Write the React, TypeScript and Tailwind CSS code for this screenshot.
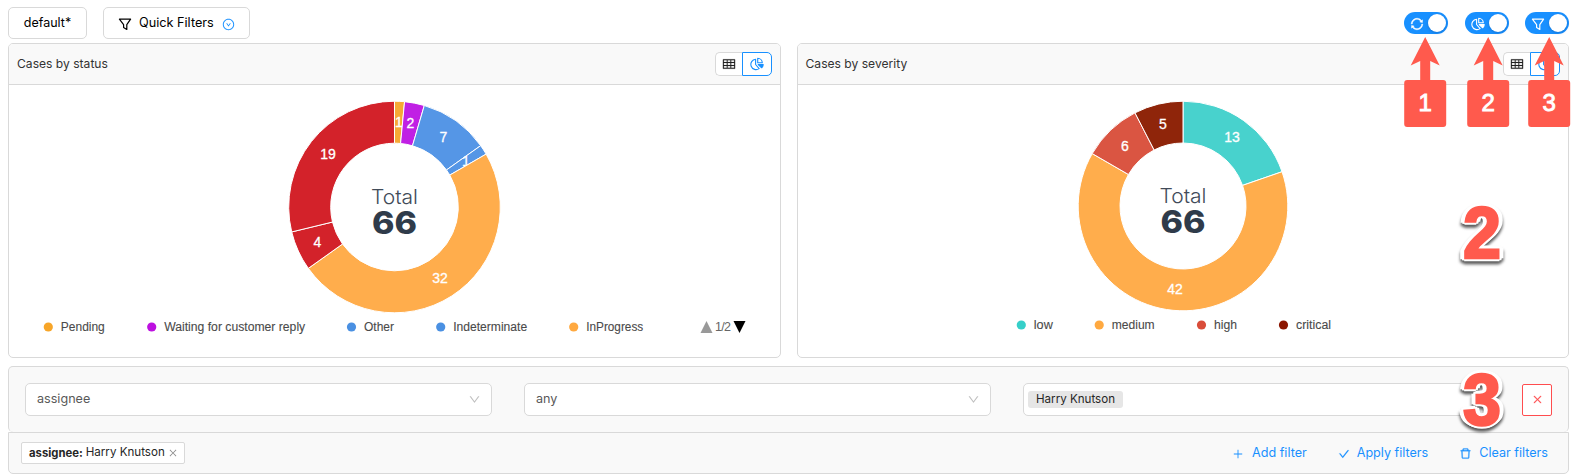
import React from "react";
import {
  AiOutlineCheck,
  AiOutlineClose,
  AiOutlineDelete,
  AiOutlineDown,
  AiOutlineDownCircle,
  AiOutlinePlus,
  AiOutlineSync,
  AiOutlineTable,
} from "react-icons/ai";

type Slice = { value: number; color: string; x: number; y: number };
type Entry = { label: string; color: string; x: number; width: number };

const HELVETICA = "'Liberation Sans', Arial, sans-serif";

function FunnelIcon({ className = "" }: { className?: string }) {
  return (
    <svg viewBox="0 0 14 14" className={className} fill="none" stroke="currentColor" strokeWidth="1.2" strokeLinejoin="round">
      <path d="M1.4 2.2h11.2L8.8 7.6v4.8L5.6 10.4V7.6z" />
    </svg>
  );
}

function PieIcon({ className = "" }: { className?: string }) {
  return (
    <svg viewBox="0 0 14 14" className={className} fill="none" stroke="currentColor" strokeWidth="1.1" strokeLinejoin="round">
      <path d="M5.6 2.2a5.2 5.2 0 1 0 3.5 9.4L5.6 7.5z" />
      <path d="M7.7 1.2v4.5h4.6a4.7 4.7 0 0 0-4.6-4.5z" />
      <path d="M8.2 7.6h5c0 1.3-.6 2.4-1.5 3.2z" fill="currentColor" />
    </svg>
  );
}

function Toggle({ children }: { children: React.ReactNode }) {
  return (
    <button className="flex h-[22px] w-[44px] items-center justify-between rounded-full bg-[#1890ff] pr-[2px] pl-[6px] text-white">
      {children}
      <span className="size-[18px] rounded-full bg-white shadow-[0_1px_3px_rgba(0,35,90,0.25)]" />
    </button>
  );
}

function ring(cx: number, cy: number, r: number, q: number, a: number, b: number) {
  const p = (rad: number, t: number) => `${cx + rad * Math.sin(t)} ${cy - rad * Math.cos(t)}`;
  const big = b - a > Math.PI ? 1 : 0;
  return `M${p(r, a)}A${r} ${r} 0 ${big} 1 ${p(r, b)}L${p(q, b)}A${q} ${q} 0 ${big} 0 ${p(q, a)}Z`;
}

function Donut({ slices, cx, cy, outer, inner }: { slices: Slice[]; cx: number; cy: number; outer: number; inner: number }) {
  const total = slices.reduce((sum, s) => sum + s.value, 0);
  let start = 0;
  return (
    <g>
      {slices.map((s, i) => {
        const from = start;
        start += (s.value / total) * Math.PI * 2;
        return (
          <g key={i}>
            <path d={ring(cx, cy, outer, inner, from, start)} fill={s.color} stroke="#fff" strokeWidth="1" />
            <text x={s.x} y={s.y + 5} fontSize="14" fontFamily={HELVETICA} fill="#fff" stroke="#fff" strokeWidth="0.3" textAnchor="middle">
              {s.value}
            </text>
          </g>
        );
      })}
      <text x={cx - 23.5} y={cy - 3} fontSize="20" fontWeight="300" fill="#414b59" textLength="47" lengthAdjust="spacingAndGlyphs" fontFamily="Inter, sans-serif">
        Total
      </text>
      <text x={cx - 22.5} y={cy + 26.5} fontSize="31" fontWeight="800" fill="#2f3b4a" textLength="45" lengthAdjust="spacingAndGlyphs" fontFamily="Inter, sans-serif">
        {total}
      </text>
    </g>
  );
}

function Legend({ entries, y }: { entries: Entry[]; y: number }) {
  return (
    <g fontFamily={HELVETICA} fontSize="12" fill="#4a4a4a" stroke="#4a4a4a" strokeWidth="0.1">
      {entries.map((e) => (
        <g key={e.label}>
          <circle cx={e.x} cy={y} r="4.6" fill={e.color} stroke="none" />
          <text x={e.x + 12.5} y={y + 4} textLength={e.width} lengthAdjust="spacingAndGlyphs">
            {e.label}
          </text>
        </g>
      ))}
    </g>
  );
}

function Card({ title, children }: { title: string; children: React.ReactNode }) {
  return (
    <section className="flex h-[315px] flex-1 flex-col overflow-hidden rounded-[5px] border border-[#d9d9d9] bg-white">
      <header className="flex h-[41px] shrink-0 items-center justify-between border-b border-[#d9d9d9] bg-[#f9f9f9] pr-2 pl-2">
        <h2 className="text-[12.1px] text-[#333333]">{title}</h2>
        <div className="flex h-6 w-[57px]">
          <button className="flex flex-1 items-center justify-center rounded-l-[5px] border border-r-0 border-[#d9d9d9] bg-white text-[#222222]">
            <AiOutlineTable className="size-[14px]" stroke="currentColor" strokeWidth={10} />
          </button>
          <button className="flex w-[30px] items-center justify-center rounded-r-[5px] border border-[#1890ff] bg-white text-[#1890ff]">
            <PieIcon className="size-[14px]" />
          </button>
        </div>
      </header>
      {children}
    </section>
  );
}

function Select({ value }: { value: string }) {
  return (
    <div className="flex h-[33px] w-[467px] items-center justify-between rounded-[5px] border border-[#d9d9d9] bg-white pr-[10px] pl-[11px]">
      <span className="text-[12.6px] text-[#595959]">{value}</span>
      <AiOutlineDown className="size-[13px] text-[#bfbfbf]" />
    </div>
  );
}

const STATUS: Slice[] = [
  { value: 1, color: "#f6a935", x: 399, y: 122 },
  { value: 2, color: "#c020e4", x: 410.5, y: 123 },
  { value: 7, color: "#5596e6", x: 443.5, y: 137 },
  { value: 1, color: "#5596e6", x: 466, y: 161 },
  { value: 32, color: "#ffad4c", x: 440, y: 278 },
  { value: 4, color: "#d3222a", x: 317.5, y: 242 },
  { value: 19, color: "#d3222a", x: 328, y: 154 },
];

const SEVERITY: Slice[] = [
  { value: 13, color: "#48d2cd", x: 1232, y: 137 },
  { value: 42, color: "#ffad4c", x: 1175, y: 289 },
  { value: 6, color: "#da5542", x: 1125, y: 145.5 },
  { value: 5, color: "#8f250a", x: 1163, y: 124 },
];

const STATUS_LEGEND: Entry[] = [
  { label: "Pending", color: "#f7a528", x: 48.3, width: 44 },
  { label: "Waiting for customer reply", color: "#bd10e0", x: 151.7, width: 141 },
  { label: "Other", color: "#4a90e2", x: 351.5, width: 30 },
  { label: "Indeterminate", color: "#4a90e2", x: 440.7, width: 74 },
  { label: "InProgress", color: "#ffa940", x: 573.7, width: 57 },
];

const SEVERITY_LEGEND: Entry[] = [
  { label: "low", color: "#36cfc9", x: 1021.3, width: 19 },
  { label: "medium", color: "#ffa940", x: 1099.2, width: 43 },
  { label: "high", color: "#d94d3a", x: 1201.5, width: 23 },
  { label: "critical", color: "#8b1500", x: 1283.5, width: 35 },
];

const MARKERS = [
  { n: 1, x: 1425.2 },
  { n: 2, x: 1488.2 },
  { n: 3, x: 1549.2 },
];

function Annotations() {
  return (
    <svg className="pointer-events-none absolute top-0 left-0" width="1572" height="475" fontFamily={HELVETICA}>
      {MARKERS.map(({ n, x }) => (
        <g key={n} fill="#ff5a4d">
          <path d={`M${x} 37l14.5 28.5l-9.5-4.5v20h-10v-20l-9.5 4.5z`} />
          <rect x={x - 21} y="80" width="42" height="47" rx="3" />
          <text x={x} y="111" fontSize="24" fill="#fff" stroke="#fff" strokeWidth="0.9" textAnchor="middle">
            {n}
          </text>
        </g>
      ))}
      {[
        { n: 2, y: 258 },
        { n: 3, y: 425 },
      ].map(({ n, y }) => (
        <text
          key={n}
          x={1482}
          y={y}
          fontSize="72"
          fontWeight="700"
          textAnchor="middle"
          fill="#ff5a4d"
          stroke="#ff5a4d"
          strokeWidth="2.5"
          textLength="38"
          lengthAdjust="spacingAndGlyphs"
          className="[filter:drop-shadow(2px_1px_0_white)_drop-shadow(-2px_1px_0_white)_drop-shadow(2px_-2px_0_white)_drop-shadow(-2px_-1px_0_white)_drop-shadow(0_3px_1.5px_rgba(0,0,0,0.65))]"
        >
          {n}
        </text>
      ))}
    </svg>
  );
}

export default function App() {
  return (
    <main className="relative h-[475px] w-[1572px] overflow-hidden bg-white pt-[7px] pr-[3px] pl-2 font-['Inter',sans-serif] text-[#262626]">
      <div className="flex h-8 items-center justify-between">
        <div className="flex gap-4">
          <button className="flex h-8 w-[79px] items-center justify-center rounded-[5px] border border-[#d9d9d9] text-[12.5px] text-black">
            default*
          </button>
          <button className="flex h-8 w-[147px] items-center rounded-[5px] border border-[#d9d9d9] pl-[14px] text-[12.7px] text-black">
            <FunnelIcon className="mt-px mr-[7px] size-[14px]" />
            Quick Filters
            <AiOutlineDownCircle className="mt-0.5 ml-2 size-[13px] text-[#1890ff]" />
          </button>
        </div>
        <div className="flex gap-[16.5px]">
          <Toggle>
            <AiOutlineSync className="mt-0.5 size-[14px]" stroke="currentColor" strokeWidth={35} />
          </Toggle>
          <Toggle>
            <PieIcon className="mt-0.5 size-[14px]" />
          </Toggle>
          <Toggle>
            <FunnelIcon className="mt-0.5 size-[14px]" />
          </Toggle>
        </div>
      </div>

      <div className="mt-1 flex gap-4">
        <Card title="Cases by status">
          <svg viewBox="9 85 771 272" width="771" height="272">
            <Donut slices={STATUS} cx={394.5} cy={207} outer={105.8} inner={63.8} />
            <Legend entries={STATUS_LEGEND} y={327} />
            <path d="M700.5 333h12l-6-12z" fill="#999" />
            <path d="M733.5 321h12l-6 12z" fill="#000" />
            <text x="715" y="331.3" fontSize="12.5" fontFamily={HELVETICA} fill="#666" textLength="16">
              1/2
            </text>
          </svg>
        </Card>
        <Card title="Cases by severity">
          <svg viewBox="798 85 770 272" width="770" height="272">
            <Donut slices={SEVERITY} cx={1183} cy={206} outer={104.8} inner={63} />
            <Legend entries={SEVERITY_LEGEND} y={325} />
          </svg>
        </Card>
      </div>

      <div className="mt-2 flex h-[66px] items-center gap-8 rounded-[5px] border border-b-0 border-[#d9d9d9] bg-[#f9f9f9] px-4">
        <Select value="assignee" />
        <Select value="any" />
        <div className="flex h-[33px] w-[467px] items-center rounded-[5px] border border-[#d9d9d9] bg-white pl-1">
          <span className="flex h-[17px] w-[95px] items-center justify-center rounded-[3px] bg-[#e6e6e6] text-[11.6px] text-[#262626]">
            Harry Knutson
          </span>
        </div>
        <button className="flex h-8 w-[30px] items-center justify-center rounded-[2px] border border-[#ff4d4f] bg-white text-[#ff4d4f]">
          <AiOutlineClose className="size-[11px]" stroke="currentColor" strokeWidth={25} />
        </button>
      </div>
      <div className="flex h-[42px] items-center justify-between rounded-b-[5px] border border-[#d9d9d9] bg-[#f9f9f9] pr-5 pl-3">
        <span className="flex h-[22px] w-[164px] items-center rounded-[2px] border border-[#d9d9d9] bg-white pl-[7px] text-[11.6px] whitespace-nowrap">
          <b className="text-[11.3px]">assignee:</b>
          <span className="ml-[3px]">Harry Knutson</span>
          <AiOutlineClose className="ml-[3px] size-[10px] text-[#8c8c8c]" />
        </span>
        <div className="flex text-[12.6px] text-[#1890ff]">
          <button className="flex items-center gap-2">
            <AiOutlinePlus className="mt-0.5 size-[12px]" />
            Add filter
          </button>
          <button className="ml-[31px] flex items-center gap-[7px]">
            <AiOutlineCheck className="mt-0.5 size-[12px]" stroke="currentColor" strokeWidth={20} />
            Apply filters
          </button>
          <button className="ml-[31px] flex items-center gap-[7px]">
            <AiOutlineDelete className="mt-0.5 size-[13px]" stroke="currentColor" strokeWidth={20} />
            Clear filters
          </button>
        </div>
      </div>
      <Annotations />
    </main>
  );
}
